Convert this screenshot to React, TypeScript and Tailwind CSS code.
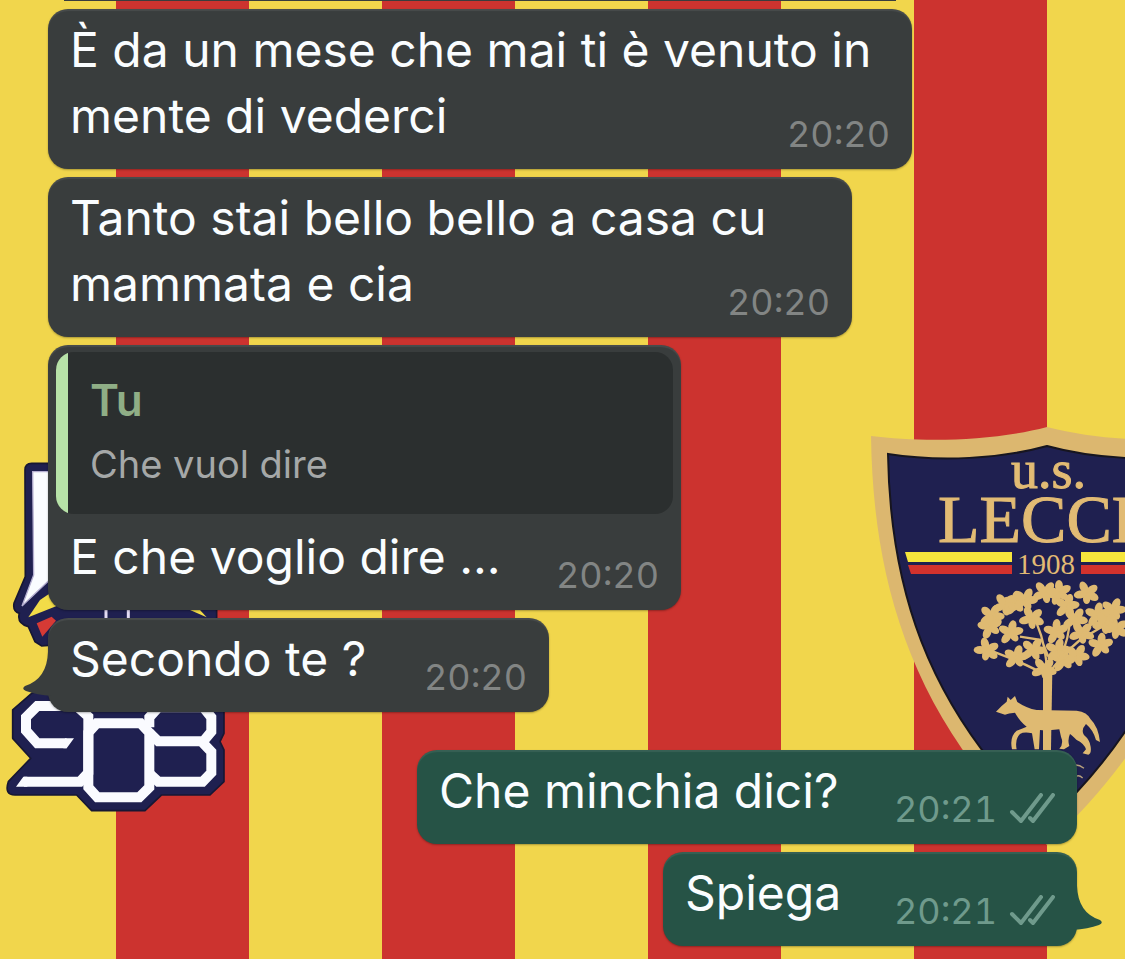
import React from "react";
import clsx from "clsx";

const leaves = [
  [465, 70, 10], [555, 38, 40], [597, 38, 0], [620, 78, 20], [680, 40, 55], [395, 108, 30],
  [390, 140, 0], [452, 158, 15], [515, 115, 50], [588, 155, 5], [645, 118, 35], [712, 105, 12],
  [760, 90, 25], [768, 145, 60], [665, 160, 45], [722, 196, 8], [520, 210, 30], [380, 210, 65],
  [468, 232, 20], [552, 268, 42], [610, 240, 10], [650, 228, 33], [592, 212, 18], [435, 75, 44],
  [495, 60, 28], [735, 130, 50],
];

const Crest = () => (
  <svg
    aria-hidden="true"
    viewBox="0 0 265 430"
    className="absolute right-0 top-[420px] h-[430px] w-[265px]"
  >
    <defs>
      <g id="leaf">
        <circle r="13" />
        <ellipse cx="0" cy="-20" rx="12" ry="18" />
        <ellipse cx="0" cy="-20" rx="12" ry="19" transform="rotate(62)" />
        <ellipse cx="0" cy="-16" rx="11" ry="16" transform="rotate(125)" />
        <ellipse cx="0" cy="-20" rx="12" ry="19" transform="rotate(205)" />
        <ellipse cx="0" cy="-20" rx="12" ry="18" transform="rotate(280)" />
      </g>
    </defs>
    <path
      d="M11 16C60 22 130 22 187 7C244 22 314 22 363 16C361 160 324 300 187 425C50 300 13 160 11 16Z"
      fill="#dcb76f"
    />
    <path
      d="M28 34C80 42 140 39 187 26C234 39 294 42 346 34C344 160 312 285 187 402C62 285 30 160 28 34Z"
      fill="#1f2050"
      stroke="#17151f"
      strokeWidth="2"
    />
    <g fill="#e2bb74" fontFamily="Liberation Serif, serif">
      <text x="151" y="68" fontSize="54" stroke="#e2bb74">u.s.</text>
      <text x="78" y="122" fontSize="68" stroke="#e2bb74">LECCE</text>
      <text x="157" y="154" fontSize="29">1908</text>
    </g>
    <path d="M45 132H152V142H48ZM221 132H265V142H221Z" fill="#f6e63c" />
    <path d="M48 145H152V154H51ZM221 145H265V154H221Z" fill="#d3322d" />
    <g transform="translate(0 160) scale(.3333)" fill="#dfba72">
      {leaves.map(([x, y, turn]) => (
        <use key={`${x}-${y}`} href="#leaf" transform={`translate(${x} ${y}) rotate(${turn})`} />
      ))}
      <path
        d="M562 290Q560 200 530 130M562 290Q520 260 400 215M560 290Q600 230 660 180L760 120M480 170L545 180L565 230M600 235Q640 150 625 70"
        fill="none"
        stroke="#dfba72"
        strokeWidth="7"
      />
      <path d="M549 275H577L573 510H549Z" />
      <path d="M408 395L425 378L440 365L443 350L452 360L465 348L472 366Q500 385 530 390L650 392Q682 396 692 418Q715 440 720 486L708 480Q700 450 678 432Q662 450 672 465Q690 480 692 500Q695 520 685 524L668 520L678 508Q672 490 650 480Q635 465 630 462Q622 480 628 498L612 508L598 506Q612 492 603 470L598 448Q560 452 540 450L537 508L524 508L516 460Q492 455 480 462Q464 478 470 508L456 508Q448 470 470 452Q490 445 500 440Q480 425 465 398Q445 400 435 404Z" />
      <path d="M640 556Q655 552 672 565M645 592Q655 582 668 594" fill="none" stroke="#b9a27c" strokeWidth="4" />
    </g>
  </svg>
);

const Badge = () => (
  <svg
    aria-hidden="true"
    viewBox="0 0 240 365"
    className="absolute left-0 top-[455px] h-[365px] w-[240px]"
  >
    <g transform="translate(0 -5) scale(.3333)">
      <path
        d="M75 60Q75 40 95 40H200V460H640L650 480V510H200V575L145 586L125 588L105 575L85 530Q50 520 58 490Q38 485 42 460L76 380Z"
        fill="#1f2050"
        stroke="#171733"
        strokeWidth="5"
      />
      <path d="M98 65H180V360L66 468L101 375Z" fill="#fafcff" stroke="#b4aed0" strokeWidth="4" />
      <path d="M85 502L120 450L150 430L170 468Z" fill="#f2dc48" />
      <path d="M110 520L155 500L168 512L127 560Z" fill="#d63a35" />
      <path d="M318 475V512M385 475V512" stroke="#e4dcf4" strokeWidth="9" />
      <path d="M565 478H598L620 502Z" fill="#f2dc48" />
    </g>
    <g transform="translate(0 145) scale(.3333)">
      <path
        d="M95 280L38 330V415L92 475L25 545Q12 585 45 585H230L275 632H435L485 585H630L672 545V450L660 425L672 400V300L150 260Z"
        fill="#1f2050"
        stroke="#171733"
        strokeWidth="5"
        strokeLinejoin="round"
      />
      <g fill="none" stroke="#fafbff" strokeWidth="30">
        <path d="M230 318H112L78 352V392L112 430H200M230 318L265 350V518L240 545H72" />
        <path d="M290 370H422L448 398V562L418 592H292L265 562V398Z" />
        <path d="M448 382V352L475 322H610L634 352V395L610 424H475L448 398M604 424L634 455V518L608 545H475L448 520" />
      </g>
      <path d="M195 415H222L200 445H190ZM82 530H70L48 560H82Z" fill="#fafbff" />
    </g>
  </svg>
);

const Ticks = () => (
  <svg
    aria-label="Consegnato"
    viewBox="0 0 46 32"
    className="h-8 w-[46px]"
    fill="none"
    stroke="currentColor"
    strokeWidth="4"
    strokeLinecap="round"
    strokeLinejoin="round"
  >
    <path d="M3 19L12 28L32 2M21 25L24 28L44 2" />
  </svg>
);

type BubbleProps = {
  time: string;
  width: string;
  mine?: boolean;
  tail?: boolean;
  quote?: React.ReactNode;
  children: React.ReactNode;
};

const Bubble = ({ time, width, mine, tail, quote, children }: BubbleProps) => (
  <div
    className={clsx(
      "relative max-w-full rounded-[20px] pb-5 shadow-[0_1px_2px_rgba(0,0,0,0.3),inset_0_2px_1px_rgba(255,255,255,0.08)]",
      mine ? "self-end bg-[#265346]" : "self-start bg-[#393d3d]",
      quote ? "pt-[7px]" : "pt-2",
      width
    )}
  >
    {quote}
    <div className="grid px-[22px]">
      <p className="col-start-1 row-start-1 text-5xl leading-[66px] text-[#fafdff]">{children}</p>
      <div
        className={clsx(
          "col-start-1 row-start-1 -mb-[3px] flex items-center gap-3 self-end justify-self-end text-4xl leading-9 tabular-nums",
          mine ? "text-[#6f9a8c]" : "text-[#828584]"
        )}
      >
        <time>{time}</time>
        {mine && <Ticks />}
      </div>
    </div>
    {tail && (
      <svg
        aria-hidden="true"
        viewBox="0 0 30 46"
        className={clsx(
          "absolute bottom-3.5 h-[46px] w-[30px]",
          mine ? "-right-[26px] -scale-x-100 text-[#265346]" : "-left-[26px] text-[#393d3d]"
        )}
      >
        <path d="M26 0Q25 27 3 34Q-1 37 4 39Q15 43 30 44V0Z" fill="currentColor" />
      </svg>
    )}
  </div>
);

const Quote = () => (
  <blockquote className="mx-2 mb-2.5 flex overflow-hidden rounded-[18px] bg-[#2b2f2f]">
    <div className="w-3 bg-[#b7e2a8]" />
    <div className="px-[22px] pb-[18px] pt-4">
      <div className="text-[44px] leading-[64px] font-semibold text-[#8fae86]">Tu</div>
      <div className="text-[38px] leading-[64px] text-[#a5a8a8]">Che vuol dire</div>
    </div>
  </blockquote>
);

const App = () => {
  return (
    <main className="relative min-h-screen overflow-hidden bg-[repeating-linear-gradient(90deg,#f1d64c_0px,#f1d64c_133px,#cc332f_133px,#cc332f_266px)] bg-[position:-17px_0] font-['Inter',sans-serif]">
      <Badge />
      <Crest />
      <div className="relative flex flex-col gap-2 px-12 pb-3">
        <div className="ml-4 h-px w-[832px] max-w-full bg-[#393d3d]" />
        <Bubble time="20:20" width="w-[864px]">
          È da un mese che mai ti è venuto in mente di vederci
        </Bubble>
        <Bubble time="20:20" width="w-[804px]">
          Tanto stai bello bello a casa cu mammata e cia
        </Bubble>
        <Bubble time="20:20" width="w-[633px]" quote={<Quote />}>
          E che voglio dire ...
        </Bubble>
        <Bubble time="20:20" width="w-[501px]" tail>
          Secondo te ?
        </Bubble>
        <div className="mt-[30px] flex flex-col gap-2">
          <Bubble time="20:21" width="w-[660px]" mine>
            Che minchia dici?
          </Bubble>
          <Bubble time="20:21" width="w-[414px]" mine tail>
            Spiega
          </Bubble>
        </div>
      </div>
    </main>
  );
};

export default App;
